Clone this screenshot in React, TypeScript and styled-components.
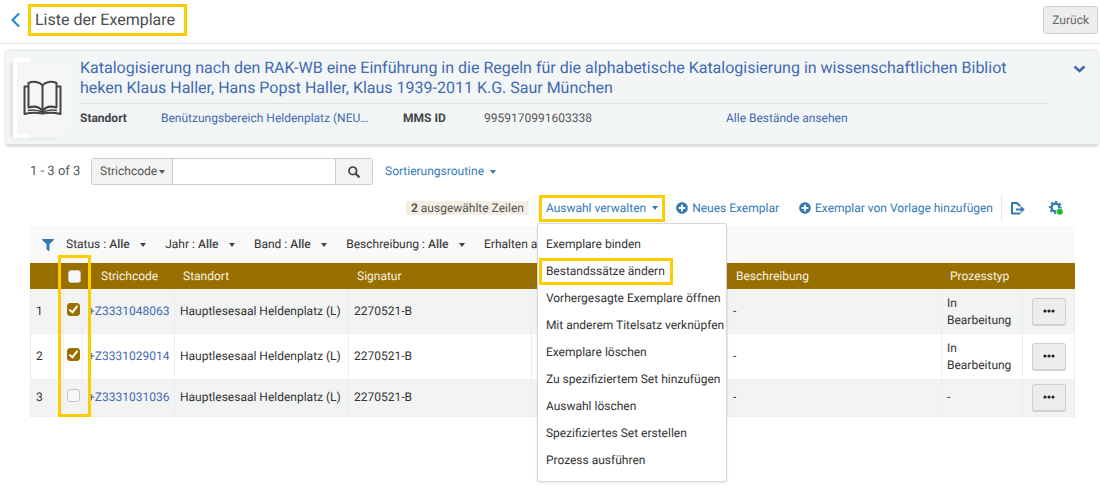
import React from 'react';
import styled, { createGlobalStyle, css } from 'styled-components';
import { FaFilter, FaPlusCircle } from 'react-icons/fa';

const brown = '#997000';
const link = '#337ab7';
const deepLink = '#4369b0';
const marker = '#ffcc00';
const line = '#e7e9e9';

const GlobalStyle = createGlobalStyle`
  *, *::before, *::after { box-sizing: border-box; }
  body {
    margin: 0;
    background: #fff;
    color: #333;
    font: 12px/17px Roboto, "Liberation Sans", sans-serif;
    text-rendering: geometricPrecision;
  }
  button, input, select { font: inherit; color: inherit; text-rendering: inherit; }
  a { text-decoration: none; }
`;

const marked = css`
  border: 3px solid ${marker};
`;

const Page = styled.div`
  min-height: 100vh;
`;

const Header = styled.header`
  display: flex;
  align-items: center;
  height: 44px;
  padding: 0 2px 3px 10px;
  border-bottom: 1px solid #e4e6e6;
`;

const BackLink = styled.a`
  display: flex;
  width: 18px;
  color: #1c87cc;
`;

const PageTitle = styled.h1`
  ${marked}
  margin: 0;
  padding: 3px 9px 3px 4px;
  color: #4c4c4c;
  font-size: 16px;
  font-weight: 400;
  line-height: 20px;
`;

const GreyButton = styled.button`
  border: 1px solid #d0d0d0;
  border-radius: 3px;
  background: #ededed;
  color: #666;
  cursor: pointer;
`;

const ReturnButton = styled(GreyButton)`
  height: 28px;
  margin-left: auto;
  padding: 0 8px;
`;

const Record = styled.section`
  display: flex;
  align-items: flex-start;
  margin: 7px 2px 0 6px;
  padding: 7px 12px 0 7px;
  height: 95px;
  border-radius: 3px;
  background: #f2f6f7;
  border-bottom: 2px solid #d8dcdc;
  box-shadow: 0 0 3px rgba(0, 0, 0, 0.25);
`;

const Cover = styled.div`
  display: flex;
  align-items: center;
  justify-content: center;
  flex: none;
  width: 54px;
  height: 80px;
  margin-right: 13px;
  padding-left: 4px;
  background:
    linear-gradient(#f6f6f6, #f6f6f6) 4px 4px / 50px 72px no-repeat,
    linear-gradient(#fff, #fff) 0 0 / 17px 100% no-repeat;
  box-shadow: -4px 2px 5px -3px rgba(0, 0, 0, 0.15);
`;

const RecordBody = styled.div`
  flex: 1;
  min-width: 0;
`;

const RecordTitle = styled.h2`
  margin: 0;
  padding-bottom: 5px;
  border-bottom: 1px solid #e0e4e5;
  font-size: 16px;
  font-weight: 400;
  line-height: 20px;
  a { color: ${deepLink}; }
`;

const Facts = styled.dl`
  display: grid;
  grid-template-columns: 81px 242px 81px 242px 1fr;
  margin: 6px 0 0;
  dt { font-weight: 700; color: #444; }
  dd { margin: 0; color: #555; }
  a { color: ${deepLink}; }
`;

const ExpandButton = styled.button`
  display: flex;
  margin: 5px 0 0 25px;
  padding: 0;
  border: 0;
  background: none;
  color: ${deepLink};
`;

const List = styled.main`
  padding: 12px 25px 0 30px;
`;

const SearchRow = styled.div`
  display: flex;
  align-items: center;
  height: 27px;
`;

const Count = styled.span`
  width: 61px;
  color: #555;
  font-size: 13px;
`;

const SearchGroup = styled.form`
  display: flex;
  width: 282px;
  height: 27px;
  margin-right: 12px;
  border: 1px solid #ccc;
  border-radius: 3px;
  overflow: hidden;
`;

const Caret = styled.span`
  display: inline-block;
  border: solid transparent;
  border-width: 4px 3px 0;
  border-top-color: currentColor;
`;

const SelectWrap = styled.span<{ $box?: boolean }>`
  display: inline-flex;
  align-items: center;
  position: relative;
  color: #444;
  ${({ $box }) => $box && css`
    background: #f3f3f3;
    border-right: 1px solid #ccc;
    color: #555;
  `}
  ${Caret} {
    position: absolute;
    right: ${({ $box }) => ($box ? 7 : 0)}px;
    pointer-events: none;
  }
`;

const Select = styled.select<{ $strong?: boolean }>`
  appearance: none;
  border: 0;
  padding: 0;
  background: none;
  font-weight: ${({ $strong }) => ($strong ? 500 : 400)};
  width: ${({ $strong }) => ($strong ? '37px' : '80px')};
  padding-left: ${({ $strong }) => ($strong ? 0 : 8)}px;
`;

const SearchInput = styled.input`
  flex: 1;
  min-width: 0;
  border: 0;
  padding: 0 8px;
  outline: 0;
`;

const SearchButton = styled.button`
  display: flex;
  align-items: center;
  justify-content: center;
  width: 37px;
  padding: 0;
  border: 0;
  border-left: 1px solid #ccc;
  background: #f3f3f3;
  color: #444;
`;

const TextButton = styled.button<{ $marked?: boolean }>`
  display: inline-flex;
  align-items: center;
  gap: 6px;
  border: 0;
  padding: 0;
  background: none;
  color: ${link};
  white-space: nowrap;
  cursor: pointer;
  ${({ $marked }) => $marked && css`
    ${marked}
    height: 27px;
    padding: 0 4px;
  `}
`;

const Toolbar = styled.div`
  display: flex;
  align-items: center;
  justify-content: flex-end;
  height: 28px;
  margin-top: 9px;
  padding-right: 12px;
`;

const Badge = styled.span`
  margin-right: 10px;
  padding: 0 5px;
  border-radius: 2px;
  background: #f3eee3;
  color: #555;
  line-height: 14px;
`;

const MenuAnchor = styled.div`
  position: relative;
  margin-right: 11px;
`;

const Menu = styled.ul`
  position: absolute;
  z-index: 3;
  top: 28px;
  left: -2px;
  width: 190px;
  margin: 0;
  padding: 7px 1px;
  list-style: none;
  border: 1px solid #d8d8d8;
  border-radius: 3px;
  background: #fff;
  box-shadow: 0 1px 3px rgba(0, 0, 0, 0.1);
`;

const MenuItem = styled.button<{ $marked?: boolean }>`
  display: block;
  height: 27px;
  padding: 0 7px;
  border: 0;
  background: none;
  color: #333;
  white-space: nowrap;
  text-align: left;
  ${({ $marked }) => $marked && css`
    ${marked}
    padding: 0 5px 0 4px;
  `}
`;

const Actions = styled.div`
  display: flex;
  gap: 20px;
  padding-right: 8px;
  ${TextButton} { gap: 4px; }
`;

const ToolIcons = styled.div`
  display: flex;
  align-items: center;
  gap: 24px;
  height: 28px;
  padding-left: 9px;
  border-left: 1px solid ${line};
  ${TextButton} { gap: 0; }
`;

const Filters = styled.div`
  display: flex;
  align-items: center;
  gap: 19px;
  height: 37px;
  margin-top: 4px;
  padding-left: 12px;
  overflow: hidden;
  background: #f9f9f9;
  color: #333;
  > svg { margin-right: -7px; color: ${link}; }
`;

const Filter = styled.label`
  display: flex;
  align-items: center;
  gap: 3px;
  white-space: nowrap;
`;

const TableArea = styled.div`
  position: relative;
`;

const ColumnMarker = styled.div`
  ${marked}
  position: absolute;
  z-index: 1;
  top: -8px;
  bottom: 0;
  left: 28px;
  width: 33px;
  pointer-events: none;
`;

const Table = styled.table`
  width: 100%;
  table-layout: fixed;
  border-collapse: separate;
  border-spacing: 0;
  th {
    height: 26px;
    padding: 0 8px;
    background: ${brown};
    color: #f5f0e2;
    font-weight: 400;
    text-align: left;
  }
  td {
    padding: 0 5px;
    border-right: 1px solid #eceeee;
    white-space: nowrap;
  }
  td:first-child { border-left: 1px solid #eceeee; }
  tbody tr:nth-child(odd) td { background: #f2f4f4; }
  tbody tr:last-child td { border-bottom: 1px solid #eceeee; }
  td a { color: ${deepLink}; }
  th.code { padding-left: 18px; }
  th.pick { padding: 0 0 0 4px; }
  td.pick { padding: 0 0 5px 3px; }
  td.process { white-space: normal; }
  td.more { padding: 0 0 0 9px; }
`;

const Row = styled.tr<{ $tall: boolean }>`
  height: ${({ $tall }) => ($tall ? 45 : 38)}px;
`;

const Checkbox = styled.input`
  appearance: none;
  display: block;
  width: 13px;
  height: 13px;
  margin: 0;
  border: 1px solid #c6c6c6;
  border-radius: 3px;
  background: #f7f7f7;
  &:checked {
    border-color: ${brown};
    background: ${brown};
  }
  &:checked::after {
    content: '';
    display: block;
    width: 5px;
    height: 9px;
    margin-left: 3px;
    border: solid #fff;
    border-width: 0 2px 2px 0;
    transform: rotate(38deg);
  }
`;

const MoreButton = styled(GreyButton)`
  display: flex;
  align-items: center;
  justify-content: center;
  width: 34px;
  height: 28px;
  padding: 0;
  border-bottom-width: 2px;
  color: #222;
`;

const BookIcon = () => (
  <svg width="39" height="36" viewBox="0 0 39 36" fill="none" stroke="#444" strokeWidth="2" strokeLinejoin="round" aria-hidden="true">
    <path d="M19.500 5.500C16.500 1.500 10 1 5.500 3v24.500c5-1.500 11-1 14 4 3-5 9-5.500 14-4V3C29 1 22.500 1.500 19.500 5.500v26" />
    <path d="M5.500 6.500H1.500V34c6-1.500 12-1.500 18-.5 6-1 12-1 18 .5V6.500h-4" />
    <path d="M5 30.500c5-1 10-.5 14.500 2 4.500-2.500 9.500-3 14.500-2" strokeWidth="1.500" />
  </svg>
);

const SearchIcon = () => (
  <svg width="12" height="12" viewBox="0 0 12 12" fill="none" stroke="currentColor" aria-hidden="true">
    <circle cx="4.800" cy="4.800" r="3.800" strokeWidth="1.700" />
    <path d="M7.800 7.800l3 3" strokeWidth="2.200" strokeLinecap="round" />
  </svg>
);

const ExportIcon = () => (
  <svg width="14" height="13" viewBox="0 0 14 13" fill="none" stroke="currentColor" strokeWidth="2" strokeLinejoin="round" aria-hidden="true">
    <path d="M8.500 10.500v1H1V1h5l2.500 2.500v1M5 7.500h7" />
    <path d="M10 4.500l3.500 3-3.500 3z" fill="currentColor" strokeWidth=".5" />
  </svg>
);

const GearIcon = () => (
  <svg width="14" height="14" viewBox="0 0 14 14" fill="none" aria-hidden="true">
    <circle cx="6.500" cy="6.500" r="3.900" stroke="currentColor" strokeWidth="2.400" />
    <circle cx="6.500" cy="6.500" r="5.600" stroke="currentColor" strokeWidth="1.800" strokeDasharray="2.400 2" strokeDashoffset="1.200" />
    <circle cx="10.800" cy="10.800" r="3.500" fill="#fff" />
    <circle cx="10.800" cy="10.800" r="3" fill="#22b82e" />
  </svg>
);

const DotsIcon = () => (
  <svg width="12" height="4" viewBox="0 0 12 4" fill="currentColor" aria-hidden="true">
    <circle cx="2" cy="2" r="1.600" />
    <circle cx="6" cy="2" r="1.600" />
    <circle cx="10" cy="2" r="1.600" />
  </svg>
);

const menuItems = [
  'Exemplare binden',
  'Bestandssätze ändern',
  'Vorhergesagte Exemplare öffnen',
  'Mit anderem Titelsatz verknüpfen',
  'Exemplare löschen',
  'Zu spezifiziertem Set hinzufügen',
  'Auswahl löschen',
  'Spezifiziertes Set erstellen',
  'Prozess ausführen',
];

const filters = ['Status', 'Jahr', 'Band', 'Beschreibung'];

const items = [
  { code: '+Z3331048063', process: 'In Bearbeitung', selected: true },
  { code: '+Z3331029014', process: 'In Bearbeitung', selected: true },
  { code: '+Z3331031036', process: '-', selected: false },
];

const columnWidths = [34, 19, 92, 174, 183, 196, undefined, 81, 52];

export default function App() {
  return (
    <Page>
      <GlobalStyle />
      <Header>
        <BackLink href="#back" aria-label="Zurück">
          <svg width="11" height="16" viewBox="0 0 11 16" fill="none" stroke="currentColor" strokeWidth="2">
            <path d="M9 1.500L2.500 8 9 14.500" />
          </svg>
        </BackLink>
        <PageTitle>Liste der Exemplare</PageTitle>
        <ReturnButton type="button">Zurück</ReturnButton>
      </Header>

      <Record>
        <Cover><BookIcon /></Cover>
        <RecordBody>
          <RecordTitle>
            <a href="#record">
              Katalogisierung nach den RAK-WB eine Einführung in die Regeln für die alphabetische Katalogisierung in wissenschaftlichen Bibliot<br />
              heken Klaus Haller, Hans Popst Haller, Klaus 1939-2011 K.G. Saur München
            </a>
          </RecordTitle>
          <Facts>
            <dt>Standort</dt>
            <dd><a href="#location">Benützungsbereich Heldenplatz (NEU…</a></dd>
            <dt>MMS ID</dt>
            <dd>9959170991603338</dd>
            <dd><a href="#holdings">Alle Bestände ansehen</a></dd>
          </Facts>
        </RecordBody>
        <ExpandButton type="button" aria-label="Details">
          <svg width="13" height="12" viewBox="0 0 13 12" fill="none" stroke="currentColor" strokeWidth="2.500">
            <path d="M1.500 3.500l5 4.500 5-4.500" />
          </svg>
        </ExpandButton>
      </Record>

      <List>
        <SearchRow>
          <Count>1 - 3 of 3</Count>
          <SearchGroup>
            <SelectWrap $box>
              <Select aria-label="Suchfeld"><option>Strichcode</option></Select>
              <Caret />
            </SelectWrap>
            <SearchInput aria-label="Suche" />
            <SearchButton type="button" aria-label="Suchen">
              <SearchIcon />
            </SearchButton>
          </SearchGroup>
          <TextButton type="button">Sortierungsroutine <Caret /></TextButton>
        </SearchRow>

        <Toolbar>
          <Badge><b>2</b> ausgewählte Zeilen</Badge>
          <MenuAnchor>
            <TextButton type="button" $marked aria-expanded="true">Auswahl verwalten <Caret /></TextButton>
            <Menu>
              {menuItems.map((label, i) => (
                <li key={label}><MenuItem type="button" $marked={i === 1}>{label}</MenuItem></li>
              ))}
            </Menu>
          </MenuAnchor>
          <Actions>
            <TextButton type="button"><FaPlusCircle size={12} />Neues Exemplar</TextButton>
            <TextButton type="button"><FaPlusCircle size={12} />Exemplar von Vorlage hinzufügen</TextButton>
          </Actions>
          <ToolIcons>
            <TextButton type="button" aria-label="Exportieren"><ExportIcon /></TextButton>
            <TextButton type="button" aria-label="Einstellungen"><GearIcon /></TextButton>
          </ToolIcons>
        </Toolbar>

        <Filters>
          <FaFilter size={12} />
          {filters.map((name) => (
            <Filter key={name}>
              {name} :
              <SelectWrap>
                <Select $strong><option>Alle</option></Select>
                <Caret />
              </SelectWrap>
            </Filter>
          ))}
          <span>Erhalten am</span>
        </Filters>

        <TableArea>
          <ColumnMarker />
          <Table>
            <colgroup>
              {columnWidths.map((width, i) => <col key={i} width={width} />)}
            </colgroup>
            <thead>
              <tr>
                <th />
                <th className="pick"><Checkbox type="checkbox" aria-label="Alle auswählen" /></th>
                <th className="code">Strichcode</th>
                <th>Standort</th>
                <th>Signatur</th>
                <th />
                <th>Beschreibung</th>
                <th>Prozesstyp</th>
                <th />
              </tr>
            </thead>
            <tbody>
              {items.map((item, i) => (
                <Row key={item.code} $tall={item.selected}>
                  <td>{i + 1}</td>
                  <td className="pick">
                    <Checkbox type="checkbox" defaultChecked={item.selected} aria-label={`Zeile ${i + 1}`} />
                  </td>
                  <td><a href="#item">{item.code}</a></td>
                  <td>Hauptlesesaal Heldenplatz (L)</td>
                  <td>2270521-B</td>
                  <td>2</td>
                  <td>-</td>
                  <td className="process">{item.process}</td>
                  <td className="more">
                    <MoreButton type="button" aria-label="Weitere Aktionen"><DotsIcon /></MoreButton>
                  </td>
                </Row>
              ))}
            </tbody>
          </Table>
        </TableArea>
      </List>
    </Page>
  );
}
